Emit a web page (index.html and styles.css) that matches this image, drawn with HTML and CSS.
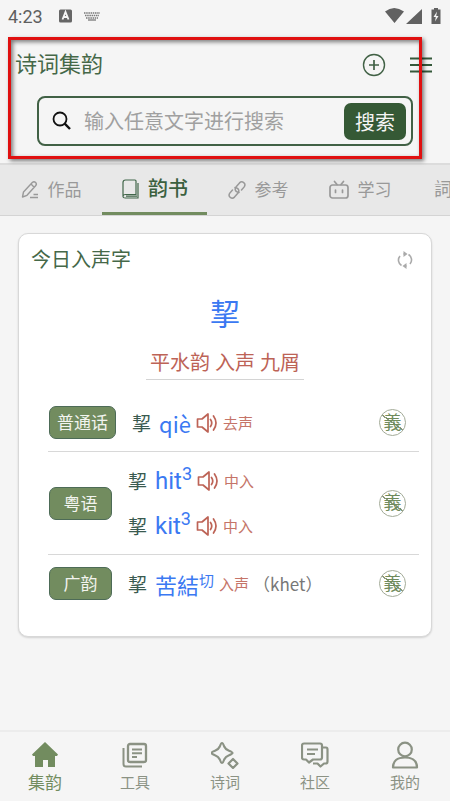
FILE: index.html
```html
<!DOCTYPE html>
<html lang="zh-CN">
<head>
  <meta charset="utf-8">
  <meta name="viewport" content="width=device-width, initial-scale=1">
  <title>诗词集韵</title>
  <link rel="stylesheet" href="styles.css">
</head>
<body>

<!-- shared icons -->
<svg class="defs" width="0" height="0">
  <symbol id="speaker" viewBox="0 0 22 22">
    <path d="M1.500 7H6l6-5v18l-6-5H1.500z M14.500 7.500q2.500 3.500 0 7 M17.500 4q5 7 0 14" fill="none" stroke="currentColor" stroke-width="1.700" stroke-linejoin="round" stroke-linecap="round"/>
  </symbol>
</svg>

<div class="statusbar">
  <span class="clock">4:23</span>
  <svg width="13" height="14" viewBox="0 0 13 14"><rect width="13" height="13" y=".5" rx="1.500" fill="#666"/><path d="M3.500 10.500L6.500 3l3 7.500M4.600 8h3.800" fill="none" stroke="#f5f5f5" stroke-width="1.800"/></svg>
  <svg width="16" height="10" viewBox="0 0 16 10"><path d="M0 2h16M1 4.500h14M2 7h12" stroke="#777" stroke-width="1.700" stroke-dasharray="1.500 .7"/><path d="M4 9h8" stroke="#777" stroke-width="1.300"/></svg>
  <span class="space"></span>
  <svg class="signals" width="58" height="18" viewBox="0 0 58 18">
    <path d="M1 4.500Q10-2.500 20 4.500L10.500 16z M38 2v15H22z" fill="#616161"/>
    <path d="M50 1h4v1.500h2.500V17h-9V2.500H50z" fill="#616161"/>
    <path d="M53 4.500l-3.500 5.500h2.300l-.8 4.500 3.500-5.500h-2.300z" fill="#f5f5f5"/>
  </svg>
</div>

<header class="header">
  <div class="titlebar">
    <h1>诗词集韵</h1>
    <button class="iconbtn" aria-label="添加">
      <svg width="24" height="24" viewBox="0 0 24 24" fill="none" stroke="#416145"><circle cx="12" cy="12" r="10.500" stroke-width="1.400"/><path d="M12 7v10M7 12h10" stroke-width="1.700"/></svg>
    </button>
    <button class="iconbtn" aria-label="菜单">
      <svg width="22" height="24" viewBox="0 0 22 24"><path d="M0 5.500h22M0 12h22M0 18.500h22" stroke="#35593a" stroke-width="2"/></svg>
    </button>
  </div>
  <form class="search">
    <svg width="20" height="20" viewBox="0 0 20 20" fill="none" stroke="#111"><circle cx="8" cy="8" r="6.500" stroke-width="1.800"/><path d="M12.700 12.700L18 18" stroke-width="2.400"/></svg>
    <input type="text" placeholder="输入任意文字进行搜索" aria-label="搜索">
    <button type="button">搜索</button>
  </form>
  <div class="frame"></div>
</header>

<nav class="tabs">
  <a href="#works" class="tab">
    <svg width="18" height="20" viewBox="0 0 18 20" fill="none" stroke="#999" stroke-width="1.400"><path d="M1.500 17l1-5L11.300 2.600q1.700-1.600 3.300 0t0 3.200L6 15.300z M10 4l3.200 3.200M9 17.500h8M12.500 14.500H17" stroke-linejoin="round"/></svg>
    <span>作品</span>
  </a>
  <a href="#rhyme" class="tab active">
    <svg width="18" height="20" viewBox="0 0 18 20" fill="none" stroke="#41664a" stroke-width="1.200"><path d="M4.500 1h9.500q1 0 1 1v13.500H4.500Q2 15.500 2 17.300T4.500 19H17V4M2 17.300V3.500q0-2.500 2.500-2.500M5 17.200h11"/></svg>
    <span>韵书</span>
  </a>
  <a href="#reference" class="tab">
    <svg width="18" height="20" viewBox="0 0 18 20" fill="none" stroke="#999" stroke-width="1.500" stroke-linecap="round"><path d="M11 12.500q-3.500-.5-3.800-3Q7 8 8.200 6.700l3.300-3.800q2-2 4.200-.3t.5 4.300L13.500 10"/><path d="M7 7.500q3.500.5 3.800 3 .2 1.500-1 2.800l-3.300 3.800q-2 2-4.200.3t-.5-4.300L4.500 10"/></svg>
    <span>参考</span>
  </a>
  <a href="#study" class="tab">
    <svg width="20" height="20" viewBox="0 0 20 20" fill="none" stroke="#999" stroke-width="1.700" stroke-linecap="round"><rect x="1" y="5" width="18" height="13" rx="2.500"/><path d="M5.500 1.500L8 4.500M14.500 1.500L12 4.500M6.500 10v2.500M13.500 10v2.500"/></svg>
    <span>学习</span>
  </a>
  <a href="#ci" class="tab last"><span>詞</span></a>
</nav>

<main class="card">
  <div class="cardhead">
    <h2>今日入声字</h2>
    <button class="iconbtn" aria-label="刷新">
      <svg width="18" height="18" viewBox="0 0 18 18" fill="none" stroke="#aaa" stroke-width="1.600"><path d="M5.500 14.500A6.300 6.300 0 0 1 4 5M7.500 3A6.500 6.500 0 0 1 8.500 3M12.500 3.500A6.300 6.300 0 0 1 14 13M10.500 15H9.500"/><path d="M7.500 0l4 3-4 3zM10.500 12l-4 3 4 3z" fill="#aaa" stroke="none"/></svg>
    </button>
  </div>

  <a href="#char" class="bigchar">挈</a>
  <div class="rhyme"><span>平水韵 入声 九屑</span></div>

  <section class="row">
    <span class="badge">普通话</span>
    <div class="readings">
      <p><span class="hanzi">挈</span><a href="#qie" class="sound noto">qiè</a><svg width="22" height="22"><use href="#speaker"/></svg><span class="tone">去声</span></p>
    </div>
    <button class="meaning">義</button>
  </section>

  <section class="row">
    <span class="badge">粤语</span>
    <div class="readings">
      <p><span class="hanzi">挈</span><a href="#hit" class="sound">hit<sup>3</sup></a><svg width="22" height="22"><use href="#speaker"/></svg><span class="tone">中入</span></p>
      <p><span class="hanzi">挈</span><a href="#kit" class="sound">kit<sup>3</sup></a><svg width="22" height="22"><use href="#speaker"/></svg><span class="tone">中入</span></p>
    </div>
    <button class="meaning">義</button>
  </section>

  <section class="row">
    <span class="badge">广韵</span>
    <div class="readings">
      <p><span class="hanzi">挈</span><a href="#fanqie" class="sound fanqie">苦結<sup>切</sup></a><span class="tone">入声</span><span class="roman">（khet）</span></p>
    </div>
    <button class="meaning">義</button>
  </section>
</main>

<nav class="bottom">
  <a href="#home" class="active">
    <svg width="28" height="28" viewBox="0 0 28 28"><path d="M14 1L27 13.500l-1 1.500h-2v11h-7v-7h-5v7H4V15H2l-1-1.500z" fill="#728c5f"/></svg>
    <span>集韵</span>
  </a>
  <a href="#tools">
    <svg width="28" height="28" viewBox="0 0 28 28" fill="none" stroke="#8b9284" stroke-width="2"><rect x="7" y="3" width="18" height="18" rx="2" stroke-width="2.300"/><path d="M2.500 7v16q0 2.500 2.500 2.500h16M11 8.500h10M11 12.200h10M11 16h5"/></svg>
    <span>工具</span>
  </a>
  <a href="#poems">
    <svg width="28" height="28" viewBox="0 0 28 28" fill="none" stroke="#8b9284" stroke-width="2.200" stroke-linejoin="round"><path d="M11 2Q12 2 13.200 5.500Q14.500 8.500 18 9.800Q21.500 11.200 21.500 12T18 14.200Q14.500 15.500 13.200 18.500Q12 22 11 22T8.800 18.500Q7.500 15.500 4 14.200Q.5 12.800 .5 12T4 9.800Q7.500 8.500 8.800 5.500Q10 2 11 2z M22 18l4.500 4.500-4.500 4.500-4.500-4.500z"/></svg>
    <span>诗词</span>
  </a>
  <a href="#community">
    <svg width="28" height="28" viewBox="0 0 28 28" fill="none" stroke="#8b9284" stroke-width="2.200" stroke-linejoin="round"><path d="M3 2.500h16q2 0 2 2v12q0 2-2 2H12l-4 3-3-3H3q-2 0-2-2v-12q0-2 2-2z M6 8.500h11M6 13h8M22 6.500h3q1.500 0 1.500 2v12q0 2-2 2H23l-3.500 3-3-3H12"/></svg>
    <span>社区</span>
  </a>
  <a href="#mine">
    <svg width="28" height="28" viewBox="0 0 28 28" fill="none" stroke="#8b9284" stroke-width="2.200" stroke-linejoin="round"><circle cx="14" cy="8.500" r="6.800"/><path d="M2 26.500Q2 16.500 14 16.500T26 26.500z"/></svg>
    <span>我的</span>
  </a>
</nav>

</body>
</html>
```

FILE: styles.css
```css
* {
	box-sizing: border-box;
}

body {
	margin: 0;
	min-height: 100vh;
	display: flex;
	flex-direction: column;
	background: #f5f5f5;
	color: #456848;
	font-family: Roboto, "Noto Sans CJK SC", sans-serif;
}

h1, h2, p {
	margin: 0;
	font-weight: 400;
}

a {
	color: inherit;
	text-decoration: none;
}

button {
	font-family: inherit;
	cursor: pointer;
}

svg {
	flex: none;
}

.defs {
	position: absolute;
}

.statusbar {
	height: 32px;
	padding: 0 8px;
	display: flex;
	align-items: center;
}

.clock {
	width: 51px;
	color: #5f5f5f;
	font-size: 18px;
}

.statusbar svg {
	margin-right: 12px;
}

.statusbar .signals {
	margin-right: 0;
}

.space {
	flex: 1;
}

/* HEADER */
.header {
	position: relative;
	height: 131px;
	padding: 17px 18px 0 15px;
}

.titlebar {
	display: flex;
	align-items: center;
	height: 32px;
	gap: 24px;
}

.titlebar h1 {
	flex: 1;
	font-size: 22px;
	line-height: 30px;
}

.iconbtn {
	display: flex;
	padding: 0;
	border: 0;
	background: none;
}

.search {
	display: flex;
	align-items: center;
	height: 50px;
	margin: 15px 19px 0 22px;
	padding: 0 5px 0 13px;
	border: 2px solid #416145;
	border-radius: 8px;
}

.search input {
	flex: 1;
	min-width: 0;
	padding: 2px 12px 0;
	border: 0;
	outline: 0;
	background: none;
	font-family: inherit;
	font-size: 20px;
}

.search input::placeholder {
	color: #a0a0a0;
	opacity: 1;
}

.search button {
	width: 62px;
	height: 37px;
	padding: 0;
	border: 0;
	border-radius: 7px;
	background: #355935;
	color: #f5f5f5;
	font-size: 20px;
}

/* red highlight over the search area */
.frame {
	position: absolute;
	top: 5px;
	left: 8px;
	right: 28px;
	height: 122px;
	border: 3px solid #e01010;
	box-shadow: 2px 2px 4px rgba(0,0,0,.5), inset 2px 2px 4px rgba(0,0,0,.5);
	pointer-events: none;
}

/* TABS */
.tabs {
	display: flex;
	height: 53px;
	overflow: hidden;
	background: #e8e8e8;
	border-top: 2px solid #dcdcdc;
	border-bottom: 1px solid #d4d4d4;
}

.tab {
	flex: none;
	width: 102px;
	display: flex;
	align-items: center;
	justify-content: center;
	gap: 9px;
	color: #999;
	font-size: 17px;
	line-height: 22px;
}

.tab.active {
	width: 105px;
	border-bottom: 3px solid #728c5f;
	color: #3b603f;
	font-size: 20px;
	font-weight: 500;
}

.tab.last {
	width: 64px;
	font-size: 18px;
}

/* CARD */
.card {
	margin: 17px 18px;
	padding: 10px 12px 24px;
	background: #fff;
	border: 1px solid #d8d8d8;
	border-radius: 10px;
	box-shadow: 0 1px 2px rgba(0,0,0,.15);
}

.cardhead {
	display: flex;
	align-items: center;
	justify-content: space-between;
	height: 32px;
	padding-right: 5px;
}

.cardhead h2 {
	font-size: 20px;
	line-height: 30px;
}

.bigchar {
	display: block;
	margin-top: 16px;
	text-align: center;
	color: #3b79f2;
	font-size: 30px;
	line-height: 46px;
}

.rhyme {
	margin-top: 9px;
	text-align: center;
	color: #bd6356;
	font-size: 20px;
}

.rhyme span {
	display: inline-block;
	padding: 0 4px;
	border-bottom: 1px solid #d4d4d4;
	line-height: 32px;
}

.row {
	display: flex;
	align-items: center;
	margin-left: 17px;
	padding: 6px 13px 6px 1px;
	border-bottom: 1px solid #d8d8d8;
}

.rhyme + .row {
	margin-top: 14px;
}

.row:last-child {
	border-bottom: 0;
}

.badge {
	min-width: 63px;
	height: 33px;
	padding: 0 7px;
	border: 1px solid #4d6b57;
	border-radius: 7px;
	background: #728c5f;
	color: #f2f4ef;
	font-size: 17px;
	line-height: 32px;
	text-align: center;
}

.readings {
	flex: 1;
	padding-left: 16px;
}

.readings p {
	display: flex;
	align-items: center;
	height: 45px;
	white-space: nowrap;
}

.hanzi {
	width: 27px;
	color: #3a5a50;
	font-size: 19px;
}

.sound {
	margin-right: 5px;
	color: #3b79f2;
	font-size: 24px;
}

.sound.noto {
	font-family: "Noto Sans CJK SC", sans-serif;
	font-size: 22px;
}

.sound sup {
	font-size: 18px;
	line-height: 0;
}

.sound.fanqie {
	font-size: 22px;
}

.sound.fanqie sup {
	font-size: 15px;
}

.readings svg {
	margin-right: 5px;
	color: #bd6356;
}

.tone {
	color: #c57468;
	font-size: 15px;
}

.roman {
	margin-left: 4px;
	color: #777;
	font-family: "Noto Sans CJK SC", sans-serif;
	font-size: 17px;
}

/* crossed out when there is no definition */
.meaning {
	flex: none;
	width: 27px;
	height: 27px;
	padding: 0;
	border: 1px solid #a3ab98;
	border-radius: 50%;
	background: linear-gradient(35deg, transparent 48%, #8b9a7e 48%, #8b9a7e 52%, transparent 52%);
	color: #708b5c;
	font-size: 18px;
	line-height: 24px;
}

/* BOTTOM NAV */
.bottom {
	display: flex;
	height: 71px;
	margin-top: auto;
	padding-top: 9px;
	border-top: 2px solid #ececec;
}

.bottom a {
	flex: 1;
	display: flex;
	flex-direction: column;
	align-items: center;
	color: #8b9284;
	font-size: 15px;
	line-height: 28px;
}

.bottom a.active {
	color: #728c5f;
	font-size: 17px;
}
```
